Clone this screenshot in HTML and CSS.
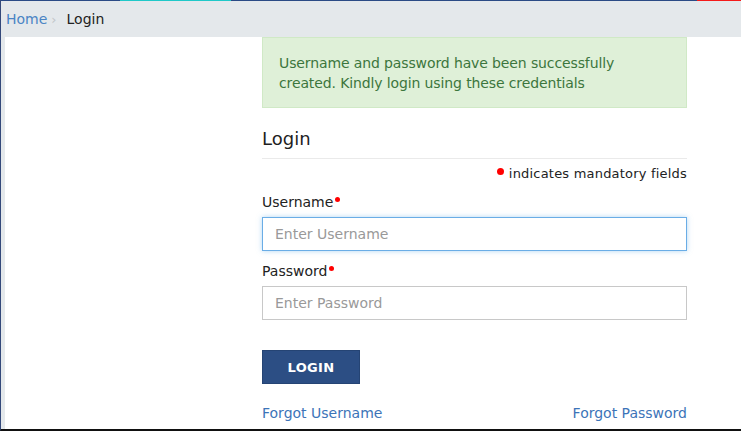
FILE: index.html
```html
<!DOCTYPE html>
<html>
<head>
<meta charset="utf-8">
<link rel="stylesheet" href="styles.css">
</head>
<body>
<div class="page">
  <div class="topline">
    <span class="seg navy1"></span>
    <span class="seg cyan"></span>
    <span class="seg navy2"></span>
    <span class="seg red"></span>
  </div>
  <div class="breadcrumb">
    <a class="crumb-link" href="#">Home</a>
    <span class="crumb-sep">›</span>
    <span class="crumb-current">Login</span>
  </div>
  <div class="main">
    <div class="content">
      <div class="alert">Username and password have been successfully created. Kindly login using these credentials</div>
      <h2 class="title">Login</h2>
      <div class="mandatory"><span class="dot big"></span>indicates mandatory fields</div>
      <label class="label">Username<span class="dot small"></span></label>
      <input class="field focus" type="text" placeholder="Enter Username">
      <label class="label">Password<span class="dot small"></span></label>
      <input class="field" type="password" placeholder="Enter Password">
      <button class="btn" type="button">LOGIN</button>
      <div class="links">
        <a href="#" class="link">Forgot Username</a>
        <a href="#" class="link">Forgot Password</a>
      </div>
    </div>
  </div>
</div>
</body>
</html>
```
FILE: styles.css
```css
html, body {
  margin: 0;
  padding: 0;
  background: #ffffff;
}
body {
  font-family: "DejaVu Sans", Verdana, sans-serif;
  font-size: 14px;
  color: #222;
}
.page {
  height: 429px;
  border-left: 1px solid #34497a;
  border-bottom: 2px solid #111;
  background: #e4e8eb;
  display: flex;
  flex-direction: column;
  overflow: hidden;
}
.topline {
  display: flex;
  height: 1px;
  flex: none;
}
.seg { display: block; height: 1px; }
.navy1 { width: 119px; background: #2a4a85; }
.cyan { width: 111px; background: #1fc8c8; }
.navy2 { flex: 1; background: #2a4a85; }
.red { width: 44px; background: #f41a1a; }
.breadcrumb {
  height: 36px;
  flex: none;
  display: flex;
  align-items: center;
  padding-left: 5px;
  font-size: 14px;
}
.crumb-link {
  color: #4a84c4;
  text-decoration: none;
}
.crumb-sep {
  color: #c2c6c9;
  margin: 0 10px 0 4px;
  font-size: 13px;
}
.crumb-current { color: #222; }
.main {
  flex: 1;
  margin-left: 4px;
  background: #fff;
  padding-left: 257px;
}
.content {
  width: 425px;
  display: flex;
  flex-direction: column;
}
.alert {
  box-sizing: border-box;
  height: 71px;
  background: #dff0d8;
  border: 1px solid #d0e9c6;
  color: #3c763d;
  padding: 15px 40px 0 16px;
  line-height: 20px;
  font-size: 14px;
  letter-spacing: -0.12px;
}
.title {
  margin: 19px 0 0 0;
  font-weight: normal;
  font-size: 18px;
  line-height: 24px;
  padding-bottom: 7px;
  border-bottom: 1px solid #eaeaea;
  color: #1f1f1f;
}
.mandatory {
  text-align: right;
  font-size: 13px;
  margin-top: 6px;
  line-height: 18px;
  color: #222;
  letter-spacing: 0.2px;
}
.dot {
  display: inline-block;
  border-radius: 50%;
  background: #f00;
  vertical-align: top;
}
.dot.big {
  width: 7px;
  height: 7px;
  margin: 3px 5px 0 0;
}
.dot.small {
  width: 5px;
  height: 5px;
  margin: 4px 0 0 2px;
}
.label {
  display: block;
  margin-top: 10px;
  line-height: 18px;
  font-size: 14px;
  color: #222;
}
.field + .label { margin-top: 11px; }
.field {
  box-sizing: border-box;
  display: block;
  width: 425px;
  height: 34px;
  margin-top: 6px;
  border: 1px solid #c8c8c8;
  padding: 0 12px;
  font-family: "DejaVu Sans", Verdana, sans-serif;
  font-size: 14px;
  color: #555;
  outline: none;
  background: #fff;
}
.field::placeholder { color: #999; }
.field.focus {
  border-color: #6aade6;
  box-shadow: 0 0 5px rgba(102, 175, 233, 0.5);
}
.btn {
  margin-top: 30px;
  width: 98px;
  height: 34px;
  background: #2c4e84;
  border: 1px solid #254474;
  color: #fff;
  font-family: "DejaVu Sans", Verdana, sans-serif;
  font-weight: bold;
  font-size: 13px;
  letter-spacing: 0.3px;
  padding: 0;
  align-self: flex-start;
}
.links {
  display: flex;
  justify-content: space-between;
  margin-top: 20px;
  line-height: 18px;
}
.link {
  color: #3c74b8;
  text-decoration: none;
  font-size: 14px;
}
```
